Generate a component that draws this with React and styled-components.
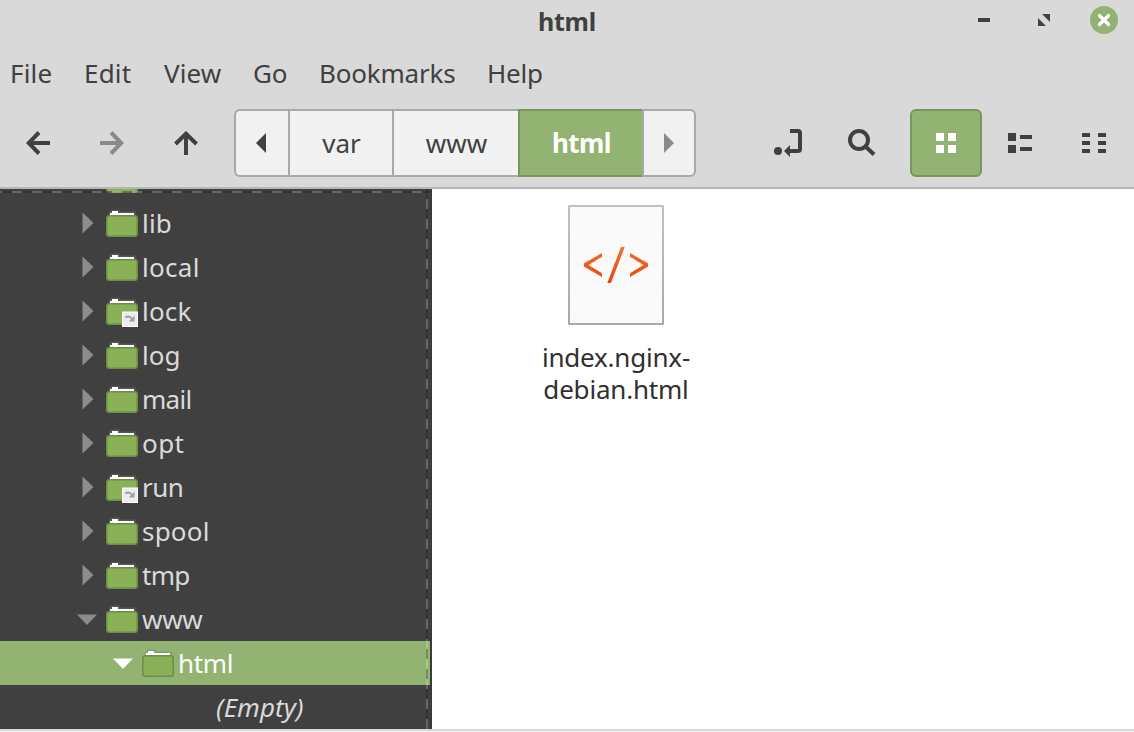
import React from "react";
import styled, { createGlobalStyle, css } from "styled-components";

const ink = "#404040";
const accent = "#92b372";
const accentEdge = "#7a9660";

const GlobalStyle = createGlobalStyle`
  * { box-sizing: border-box; }
  body { margin: 0; background: #fff; }
  svg { display: block; flex: none; }
`;

const Window = styled.div`
  width: 1134px;
  height: 732px;
  display: flex;
  flex-direction: column;
  overflow: hidden;
  background: #d9d9d9;
  color: ${ink};
  font: 26px/32px "Noto Sans", sans-serif;
  white-space: nowrap;
`;

const TitleBar = styled.header`
  height: 44px;
  flex: none;
  display: grid;
  grid-template-columns: 1fr auto 1fr;
`;

const Title = styled.h1`
  margin: 0;
  grid-column: 2;
  font-size: 25px;
  line-height: 43px;
  font-weight: 700;
  letter-spacing: -0.2px;
`;

const WindowControls = styled.div`
  display: flex;
  justify-content: flex-end;
  gap: 32px;
  padding: 6px 16px 0 0;
`;

const MenuBar = styled.nav`
  height: 60px;
  flex: none;
  display: flex;
  padding: 13px 0 0 10px;
`;

const MenuItem = styled.span`
  width: ${(p) => p.$width}px;
  letter-spacing: ${(p) => p.$track || 0}px;
`;

const Toolbar = styled.div`
  height: 85px;
  flex: none;
  display: flex;
  align-items: flex-start;
  padding: 5px 4px 0 2px;
  border-bottom: 2px solid #b6b6b6;
`;

const ToolButton = styled.button`
  width: 72px;
  height: 68px;
  margin: 0 ${(p) => p.$gap ?? 2}px 0 0;
  padding: 0;
  display: grid;
  place-items: center;
  border: 2px solid ${(p) => (p.$active ? accentEdge : "transparent")};
  border-radius: 6px;
  background: ${(p) => (p.$active ? accent : "transparent")};
  color: ${(p) => (p.$active ? "#fff" : p.$dim ? "#8a8a8a" : ink)};
`;

const PathBar = styled.div`
  display: flex;
  height: 68px;
  margin-left: 10px;
`;

const PathSegment = styled.button`
  width: ${(p) => p.$width}px;
  padding: 0 0 0 1px;
  display: flex;
  align-items: center;
  justify-content: center;
  border: 2px solid #a9a9a9;
  border-right-width: 0;
  background: #f1f1f1;
  color: ${(p) => (p.$dim ? "#8a8a8a" : ink)};
  font: inherit;
  &:first-child { border-radius: 6px 0 0 6px; padding: 0 2px 0 0; }
  &:last-child { border-right-width: 2px; border-radius: 0 6px 6px 0; padding: 0; }
  ${(p) =>
    p.$active &&
    css`
      background: ${accent};
      border-color: ${accentEdge};
      color: #fff;
      font-weight: 700;
      letter-spacing: -0.6px;
    `}
`;

const ViewTools = styled.div`
  display: flex;
  margin-left: auto;
  & > :last-child { margin-right: 0; }
`;

const Body = styled.main`
  height: 540px;
  flex: none;
  display: flex;
`;

const Sidebar = styled.aside`
  position: relative;
  width: 432px;
  height: 540px;
  display: flex;
  flex-direction: column;
  justify-content: flex-end;
  overflow: hidden;
  background: ${ink};
  border-right: 2px solid #3b3b3b;
  &::before, &::after {
    content: "";
    position: absolute;
  }
  &::before {
    left: 0; top: 2px; width: 430px; height: 2px;
    background: repeating-linear-gradient(90deg, rgba(255,255,255,.2) 0 10px, rgba(0,0,0,.2) 10px 20px) -8px 0 / 440px 2px;
  }
  &::after {
    left: 426px; top: 0; width: 2px; height: 540px;
    background: repeating-linear-gradient(180deg, rgba(0,0,0,.2) 0 10px, rgba(255,255,255,.2) 10px 20px);
  }
`;

const TreeRow = styled.div`
  height: 44px;
  flex: none;
  display: flex;
  align-items: center;
  padding-left: ${(p) => 77 + 36 * (p.$level || 0)}px;
  background: ${(p) => (p.$selected ? accent : "transparent")};
  color: ${(p) => (p.$selected ? "#fff" : "#8c8c8c")};
`;

const FolderSlot = styled.span`
  margin: 0 4px 0 9px;
`;

const FolderName = styled.span`
  color: ${(p) => (p.$selected ? "#fff" : "#dadada")};
  letter-spacing: ${(p) => p.$track || 0}px;
`;

const EmptyNote = styled.em`
  color: #dadada;
  margin-left: 139px;
  letter-spacing: 0.1px;
`;

const FilePane = styled.section`
  flex: 1;
  background: #fff;
  padding: 16px 0 0 84px;
`;

const FileItem = styled.figure`
  width: 200px;
  margin: 0;
  display: flex;
  flex-direction: column;
  align-items: center;
`;

const FileName = styled.figcaption`
  margin-top: 16px;
  color: #303030;
  text-align: center;
  letter-spacing: -0.2px;
`;

const BottomEdge = styled.div`
  height: 3px;
  border-top: 2px solid #d9d9d9;
  background: #f2f2f2;
`;

const Arrow = ({ turn = 0 }) => (
  <svg width="24" height="24" viewBox="0 0 24 24" fill="none" stroke="currentColor" strokeWidth="4">
    <g transform={`rotate(${turn} 12 12)`}>
      <path d="M24 12H4M13 1.5 2.7 12 13 22.5" />
    </g>
  </svg>
);

const Expander = ({ open }) => (
  <svg width="20" height="22" viewBox="0 0 20 22" fill="currentColor">
    <path d={open ? "M0 6.500h20L10 17z" : "M5.500 .5 16.500 11 5.500 21.500z"} />
  </svg>
);

const Folder = ({ linked }) => (
  <svg width="32" height="28" viewBox="0 0 32 28" overflow="visible">
    <path d="M3 8V3.500Q3 2 4.500 2L5 .5h8l1.500 2h14Q30 2.500 30 4v4z" fill="#777" fillOpacity=".4" />
    <path d="M4 6V4h2V2h6v2h16v2z" fill="#fff" />
    <rect x=".8" y="6.800" width="30.400" height="20.400" rx="2.500" fill="#8bb158" stroke="#6e8d46" strokeWidth="1.600" />
    {linked && (
      <>
        <rect x="16.500" y="15" width="15" height="14.500" fill="#ececec" stroke="#fff" />
        <path d="M19.200 20.500q4-2.500 7 1.500" fill="none" stroke="#a0a0a0" strokeWidth="2" />
        <path d="M28.500 18.800v5.700h-5.700z" fill="#a0a0a0" />
      </>
    )}
  </svg>
);

const folders = [
  { name: "" },
  { name: "lib", track: 0.2 },
  { name: "local", track: 0.3 },
  { name: "lock", track: 0.2 },
  { name: "log" },
  { name: "mail", track: -0.7 },
  { name: "opt", track: 0.4 },
  { name: "run", track: -0.5 },
  { name: "spool", track: 0.2 },
  { name: "tmp", track: -0.7 },
  { name: "www", open: true, track: -0.3 },
  { name: "html", open: true, level: 1, selected: true, track: -0.3 },
];

const links = ["lock", "run"];

const menus = [
  ["File", 74, 0.2],
  ["Edit", 80, 0.2],
  ["View", 89, 0.1],
  ["Go", 66, -0.3],
  ["Bookmarks", 168, -0.2],
  ["Help", 60, -0.2],
];

export default function App() {
  return (
    <Window>
      <GlobalStyle />
      <TitleBar>
        <Title>html</Title>
        <WindowControls>
          <svg width="28" height="28" viewBox="0 0 28 28"><path d="M8 12h12v4H8z" fill={ink} /></svg>
          <svg width="28" height="28" viewBox="0 0 28 28"><path d="M12 8h8v8zM8 12l8 8H8z" fill={ink} /></svg>
          <svg width="28" height="28" viewBox="0 0 28 28">
            <circle cx="14" cy="14" r="14" fill={accent} />
            <path d="m9.500 9.500 9 9m0-9-9 9" stroke="#fff" strokeWidth="3.200" strokeLinecap="round" />
          </svg>
        </WindowControls>
      </TitleBar>
      <MenuBar>
        {menus.map(([name, width, track]) => (
          <MenuItem key={name} $width={width} $track={track}>{name}</MenuItem>
        ))}
      </MenuBar>
      <Toolbar>
        <ToolButton><Arrow /></ToolButton>
        <ToolButton $dim><Arrow turn={180} /></ToolButton>
        <ToolButton><Arrow turn={90} /></ToolButton>
        <PathBar>
          <PathSegment $width={54}>
            <svg width="10" height="20" viewBox="0 0 10 20"><path d="M10 0v20L0 10z" fill="currentColor" /></svg>
          </PathSegment>
          <PathSegment $width={104}>var</PathSegment>
          <PathSegment $width={126}>www</PathSegment>
          <PathSegment $width={124} $active>html</PathSegment>
          <PathSegment $width={54} $dim>
            <svg width="10" height="20" viewBox="0 0 10 20"><path d="M0 0v20l10-10z" fill="currentColor" /></svg>
          </PathSegment>
        </PathBar>
        <ViewTools>
          <ToolButton>
            <svg width="32" height="32" viewBox="0 0 32 32">
              <circle cx="6" cy="24" r="4" fill="currentColor" />
              <path d="M18 4h8q2 0 2 2v16q0 2-2 2h-9" fill="none" stroke="currentColor" strokeWidth="4" />
              <path d="M18 18v12l-6-6z" fill="currentColor" />
            </svg>
          </ToolButton>
          <ToolButton $gap={12}>
            <svg width="32" height="32" viewBox="0 0 32 32" fill="none" stroke="currentColor" strokeWidth="4">
              <circle cx="13" cy="13" r="9" />
              <path d="m19.500 19.500 8.500 8" />
            </svg>
          </ToolButton>
          <ToolButton $active>
            <svg width="20" height="20" viewBox="0 0 20 20"><path d="M0 0h8v8H0zM12 0h8v8h-8zM0 12h8v8H0zM12 12h8v8h-8z" fill="currentColor" /></svg>
          </ToolButton>
          <ToolButton>
            <svg width="24" height="20" viewBox="0 0 24 20"><path d="M0 0h8v8H0zM0 12h8v8H0zM12 2h12v4H12zM12 14h12v4H12z" fill="currentColor" /></svg>
          </ToolButton>
          <ToolButton>
            <svg width="24" height="20" viewBox="0 0 24 20"><path d="M0 0h8v4H0zM0 8h8v4H0zM0 16h8v4H0zM16 0h8v4h-8zM16 8h8v4h-8zM16 16h8v4h-8z" fill="currentColor" /></svg>
          </ToolButton>
        </ViewTools>
      </Toolbar>
      <Body>
        <Sidebar>
          {folders.map((f) => (
            <TreeRow key={f.name} $level={f.level} $selected={f.selected}>
              <Expander open={f.open} />
              <FolderSlot><Folder linked={links.includes(f.name)} /></FolderSlot>
              <FolderName $selected={f.selected} $track={f.track}>{f.name}</FolderName>
            </TreeRow>
          ))}
          <TreeRow><EmptyNote>(Empty)</EmptyNote></TreeRow>
        </Sidebar>
        <FilePane>
          <FileItem>
            <svg width="96" height="120" viewBox="0 0 96 120">
              <defs>
                <linearGradient id="edge" x2="0" y2="1"><stop stopColor="#c1c1c1" /><stop offset="1" stopColor="#a9a9a9" /></linearGradient>
                <linearGradient id="code" gradientUnits="userSpaceOnUse" x1="0" y1="40" x2="0" y2="78"><stop stopColor="#f37329" /><stop offset="1" stopColor="#e8470d" /></linearGradient>
              </defs>
              <rect width="96" height="120" rx="1" fill="url(#edge)" />
              <rect x="2" y="2" width="92" height="116" fill="#fafafa" />
              <path d="M34 48v3.700L20.500 60 34 68.300V72L15.800 61.500v-3zM62 48v3.700L75.500 60 62 68.300V72l18.200-10.500v-3zM53 42h3.700L43 78h-3.700z" fill="url(#code)" />
            </svg>
            <FileName>index.nginx-<br />debian.html</FileName>
          </FileItem>
        </FilePane>
      </Body>
      <BottomEdge />
    </Window>
  );
}
